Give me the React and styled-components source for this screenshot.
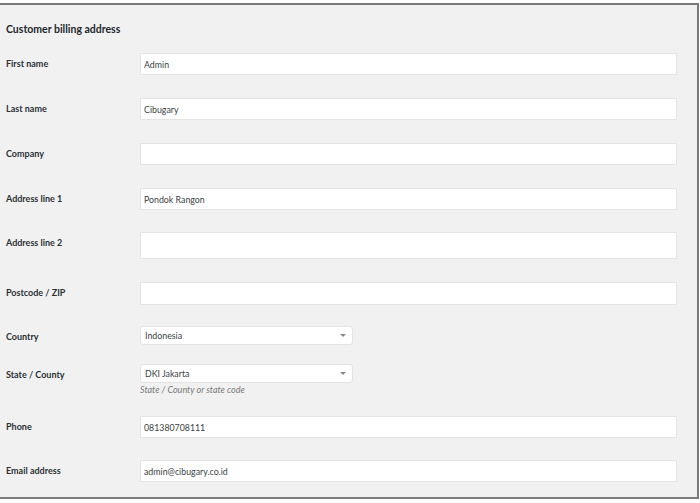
import React from 'react';
import styled, { createGlobalStyle } from 'styled-components';

const GlobalStyle = createGlobalStyle`
    body {
        margin: 0;
        background: #fff;
        font-family: Lato, "Open Sans", sans-serif;
    }
`;

const Frame = styled.div`
    box-sizing: border-box;
    width: 699px;
    height: 496px;
    margin-top: 3px;
    border-top: 2px solid #7b7b7b;
    border-right: 2px solid #7b7b7b;
    border-bottom: 2px solid #7b7b7b;
    background: #f1f1f1;
    padding: 0 20px 0 6px;
`;

const Title = styled.h2`
    margin: 0;
    padding-top: 17px;
    height: 14px;
    line-height: 14px;
    font-size: 10.5px;
    font-weight: 700;
    color: #23282d;
`;

const Form = styled.div`
    display: flex;
    flex-direction: column;
    padding-top: 17px;
`;

const Row = styled.div`
    display: flex;
    align-items: flex-start;
    margin-top: ${p => p.space}px;
`;

const Label = styled.label`
    width: 134px;
    flex: none;
    padding-top: 1px;
    line-height: 20px;
    font-size: 9px;
    font-weight: 700;
    color: #2c3136;
`;

const Field = styled.div`
    flex: 1;
    display: flex;
    flex-direction: column;
`;

const TextInput = styled.input`
    box-sizing: border-box;
    width: 537px;
    height: ${p => p.h || 22}px;
    margin: 0;
    padding: 0 3px;
    border: 1px solid #e3e3e3;
    border-radius: 0;
    background: #fff;
    font-family: Lato, "Open Sans", sans-serif;
    font-size: 8.8px;
    color: #3a3f44;
    outline: none;
`;

const SelectBox = styled.div`
    position: relative;
    box-sizing: border-box;
    width: 213px;
    height: 19px;
    padding: 0 4px;
    border: 1px solid #e3e3e3;
    border-radius: 3px;
    background: #fff;
    line-height: 17px;
    font-size: 8.8px;
    color: #3a3f44;

    &::after {
        content: '';
        position: absolute;
        right: 6px;
        top: 7px;
        border: 3px solid transparent;
        border-top: 3px solid #888;
    }
`;

const Help = styled.span`
    margin-top: 1px;
    line-height: 12px;
    font-size: 9px;
    font-style: italic;
    color: #7a7a7a;
`;

const rows = [
    { label: 'First name', value: 'Admin', space: 0 },
    { label: 'Last name', value: 'Cibugary', space: 23 },
    { label: 'Company', value: '', space: 23 },
    { label: 'Address line 1', value: 'Pondok Rangon', space: 23 },
    { label: 'Address line 2', value: '', space: 22, h: 27 },
    { label: 'Postcode / ZIP', value: '', space: 23, h: 23 },
    { label: 'Country', select: 'Indonesia', space: 21 },
    { label: 'State / County', select: 'DKI Jakarta', space: 17, help: 'State / County or state code' },
    { label: 'Phone', value: '081380708111', space: 20 },
    { label: 'Email address', value: 'admin@cibugary.co.id', space: 22 },
];

export default function App() {
    return (
        <>
            <GlobalStyle />
            <Frame>
                <Title>Customer billing address</Title>
                <Form>
                    {rows.map(row => (
                        <Row key={row.label} space={row.space}>
                            <Label>{row.label}</Label>
                            <Field>
                                {row.select ? (
                                    <SelectBox>{row.select}</SelectBox>
                                ) : (
                                    <TextInput h={row.h} defaultValue={row.value} readOnly />
                                )}
                                {row.help && <Help>{row.help}</Help>}
                            </Field>
                        </Row>
                    ))}
                </Form>
            </Frame>
        </>
    );
}
